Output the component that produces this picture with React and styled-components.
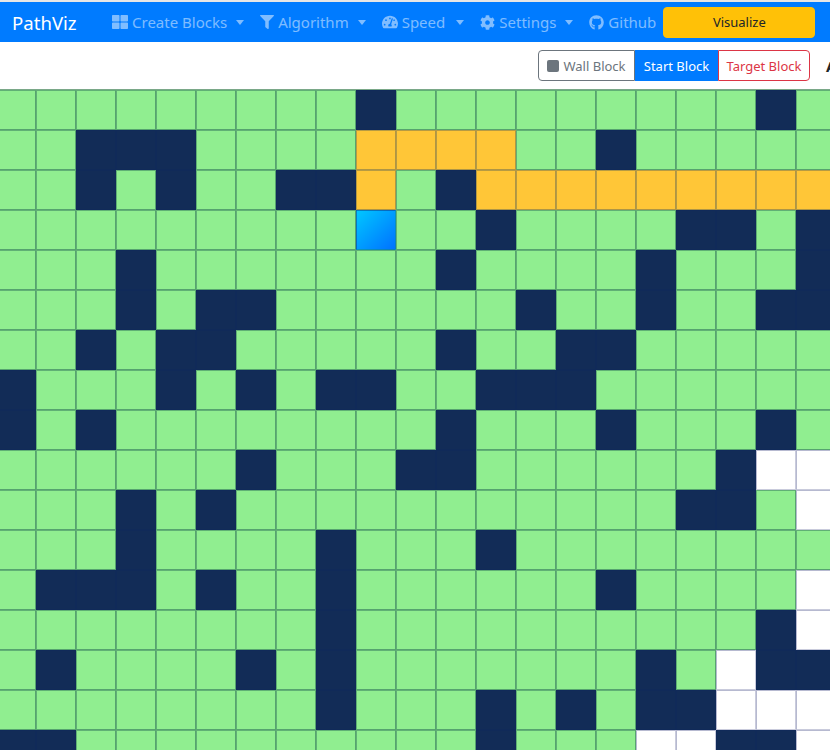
import React from "react";
import styled, { createGlobalStyle } from "styled-components";
import { FaThLarge, FaFilter, FaTachometerAlt, FaCog, FaGithub } from "react-icons/fa";

const Global = createGlobalStyle`
  html, body { margin: 0; padding: 0; background: #fff; overflow: hidden; }
  body { font-family: "Noto Sans", "Open Sans", Arial, sans-serif; }
`;

const Page = styled.div`
  width: 830px;
  height: 750px;
  overflow: hidden;
  padding-top: 2px;
  box-sizing: border-box;
  background: #fff;
  box-shadow: inset 0 2px 0 #e6e6e6;
`;

const Navbar = styled.nav`
  display: flex;
  align-items: center;
  height: 40px;
  background: #007bff;
  padding-left: 12px;
  box-sizing: border-box;
`;

const Brand = styled.span`
  color: #fff;
  font-size: 18.6px;
  width: 65px;
  margin-right: 27px;
  white-space: nowrap;
`;

const NavItem = styled.span`
  display: inline-flex;
  align-items: center;
  gap: 4px;
  padding: 0 8px;
  font-size: 15px;
  color: rgba(255, 255, 255, 0.5);
  white-space: nowrap;
`;

const Caret = styled.i`
  display: inline-block;
  margin-left: ${(p) => p.$gap || 5}px;
  border-top: 5px solid rgba(255, 255, 255, 0.5);
  border-left: 4.5px solid transparent;
  border-right: 4.5px solid transparent;
`;

const Visualize = styled.button`
  width: 152px;
  height: 31px;
  margin-left: -1px;
  background: #ffc107;
  border: 1px solid #ffc107;
  border-radius: 4px;
  color: #212529;
  font: inherit;
  font-size: 13px;
  padding: 0;
  flex: none;
`;

const Toolbar = styled.div`
  display: flex;
  align-items: center;
  height: 47px;
  padding-left: 538px;
  white-space: nowrap;
  overflow: hidden;
`;

const Group = styled.div`
  display: flex;
  height: 31px;
  flex: none;
`;

const BlockButton = styled.div`
  display: flex;
  align-items: center;
  justify-content: center;
  gap: 4px;
  box-sizing: border-box;
  font-size: 13px;
  width: ${(p) => p.$w}px;
  color: ${(p) => p.$color};
  background: ${(p) => p.$bg || "#fff"};
  border: 1px solid ${(p) => p.$border};
  border-radius: ${(p) => p.$radius};
`;

const Swatch = styled.span`
  width: 12px;
  height: 12px;
  border-radius: 2px;
  background: #6c757d;
`;

const Label = styled.span`
  margin-left: 16px;
  font-weight: 700;
  font-size: 15px;
  color: #212529;
  flex: none;
`;

const Board = styled.div`
  display: grid;
  grid-template-columns: repeat(21, 40px);
  grid-auto-rows: 40px;
  margin-left: -4px;
  width: 840px;
  border-top: 1px solid #7aa888;
`;

const kinds = {
  e: { bg: "#90ee90", a: "rgba(30,90,80,.42)", b: "rgba(30,90,80,.5)" },
  w: { bg: "#122c57", a: "#102a59", b: "#102a59" },
  p: { bg: "#ffc637", a: "rgba(110,110,80,.5)", b: "rgba(110,110,80,.55)" },
  s: { bg: "linear-gradient(135deg,#00c6ff,#0072ff)", a: "rgba(20,80,90,.4)", b: "rgba(20,80,90,.4)" },
  u: { bg: "#fff", a: "#b6b9d0", b: "#c9cbdc" },
};

const Cell = styled.div`
  box-sizing: border-box;
  background: ${(p) => kinds[p.$k].bg};
  border-left: 1px solid ${(p) => kinds[p.$k].a};
  border-top: 1px solid ${(p) => kinds[p.$k].a};
  border-right: 1px solid ${(p) => kinds[p.$k].b};
  border-bottom: 1px solid ${(p) => kinds[p.$k].b};
`;

const board = [
  { w: [9, 19] },
  { w: [2, 3, 4, 15], p: [9, 10, 11, 12] },
  { w: [2, 4, 7, 8, 11], p: [9, 12, 13, 14, 15, 16, 17, 18, 19, 20] },
  { s: [9], w: [12, 17, 18, 20] },
  { w: [3, 11, 16, 20] },
  { w: [3, 5, 6, 13, 16, 19, 20] },
  { w: [2, 4, 5, 11, 14, 15] },
  { w: [0, 4, 6, 8, 9, 12, 13, 14] },
  { w: [0, 2, 11, 15, 19] },
  { w: [6, 10, 11, 18], u: [19, 20] },
  { w: [3, 5, 17, 18], u: [20] },
  { w: [3, 8, 12] },
  { w: [1, 2, 3, 5, 8, 15], u: [20] },
  { w: [8, 19], u: [20] },
  { w: [1, 6, 8, 16, 19, 20], u: [18] },
  { w: [8, 12, 14, 16, 17], u: [18, 19, 20] },
  { w: [0, 1, 12, 18, 19], u: [16, 17, 20] },
];

const kindAt = (row, x) =>
  Object.keys(row).find((k) => row[k].includes(x)) || "e";

const columns = Array.from({ length: 21 }, (_, i) => i);

export default function App() {
  return (
    <Page>
      <Global />
      <Navbar>
        <Brand>PathViz</Brand>
        <NavItem><FaThLarge size={16} />Create Blocks<Caret /></NavItem>
        <NavItem><FaFilter size={14} />Algorithm<Caret /></NavItem>
        <NavItem><FaTachometerAlt size={16} />Speed<Caret $gap={7} /></NavItem>
        <NavItem><FaCog size={15} />Settings<Caret /></NavItem>
        <NavItem><FaGithub size={15} />Github</NavItem>
        <Visualize>Visualize</Visualize>
      </Navbar>
      <Toolbar>
        <Group>
          <BlockButton $w={97} $color="#6c757d" $border="#6c757d" $radius="4px 0 0 4px"><Swatch />Wall Block</BlockButton>
          <BlockButton $w={83} $color="#fff" $bg="#007bff" $border="#007bff" $radius="0">Start Block</BlockButton>
          <BlockButton $w={92} $color="#dc3545" $border="#dc3545" $radius="0 4px 4px 0">Target Block</BlockButton>
        </Group>
        <Label>Algorithm</Label>
      </Toolbar>
      <Board>
        {board.flatMap((row, y) =>
          columns.map((x) => <Cell key={y + "-" + x} $k={kindAt(row, x)} />)
        )}
      </Board>
    </Page>
  );
}
